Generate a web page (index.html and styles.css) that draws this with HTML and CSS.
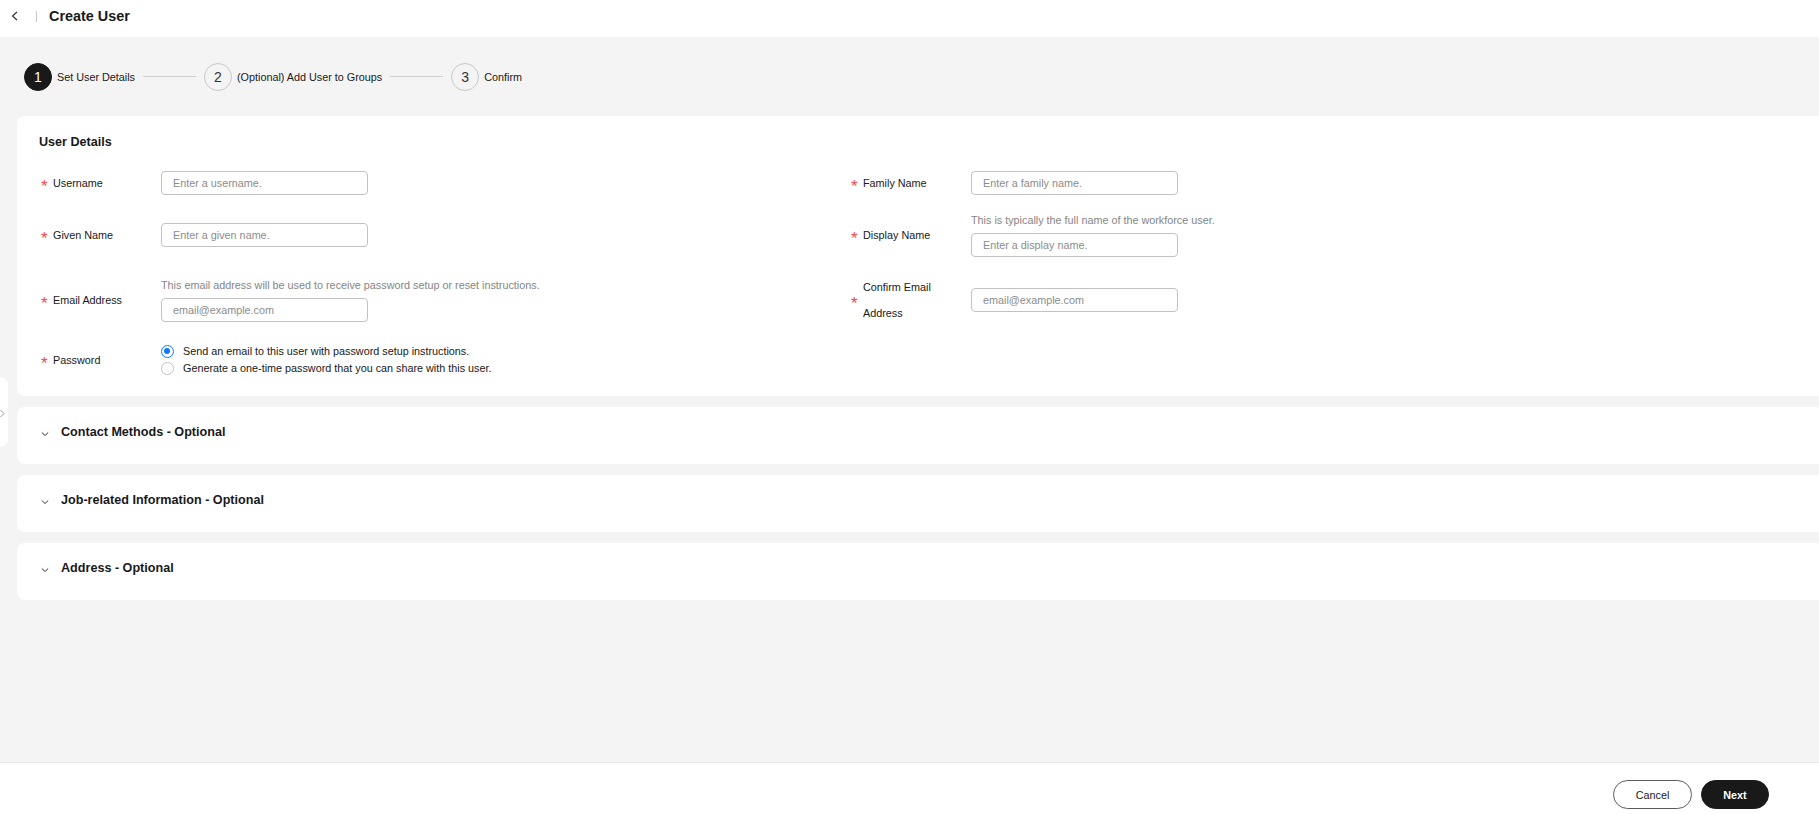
FILE: index.html
```html
<!DOCTYPE html>
<html lang="en">
<head>
  <meta charset="UTF-8" />
  <title>Create User</title>
  <link rel="stylesheet" href="styles.css">
</head>
<body>

<header class="topbar">
  <button class="back-btn" aria-label="Back">
    <svg width="10" height="14" viewBox="0 0 10 14"><path d="M7 3 L2.5 7 L7 11" fill="none" stroke="#333" stroke-width="1.2"/></svg>
  </button>
  <span class="topbar-divider"></span>
  <h1 class="page-title">Create User</h1>
</header>

<main class="content">
  <div class="side-toggle">
    <svg width="8" height="70" viewBox="0 0 8 70"><path d="M0.5 33 L4 36.5 L0.5 40" fill="none" stroke="#999" stroke-width="1"/></svg>
  </div>

  <!-- Wizard steps -->
  <ol class="steps">
    <li class="step active"><span class="step-num">1</span><span class="step-label">Set User Details</span></li>
    <li class="step-line"></li>
    <li class="step"><span class="step-num">2</span><span class="step-label">(Optional) Add User to Groups</span></li>
    <li class="step-line"></li>
    <li class="step"><span class="step-num">3</span><span class="step-label">Confirm</span></li>
  </ol>

  <!-- User details -->
  <section class="card details">
    <h2 class="card-title">User Details</h2>
    <div class="form-grid">
      <div class="field">
        <label class="field-label"><span class="req">*</span><span class="label-text">Username</span></label>
        <div class="field-control"><input class="text-input" type="text" placeholder="Enter a username."></div>
      </div>
      <div class="field">
        <label class="field-label"><span class="req">*</span><span class="label-text">Family Name</span></label>
        <div class="field-control"><input class="text-input" type="text" placeholder="Enter a family name."></div>
      </div>

      <div class="field">
        <label class="field-label"><span class="req">*</span><span class="label-text">Given Name</span></label>
        <div class="field-control"><input class="text-input" type="text" placeholder="Enter a given name."></div>
      </div>
      <div class="field">
        <label class="field-label"><span class="req">*</span><span class="label-text">Display Name</span></label>
        <div class="field-control">
          <p class="hint">This is typically the full name of the workforce user.</p>
          <input class="text-input" type="text" placeholder="Enter a display name.">
        </div>
      </div>

      <div class="field">
        <label class="field-label"><span class="req">*</span><span class="label-text">Email Address</span></label>
        <div class="field-control">
          <p class="hint">This email address will be used to receive password setup or reset instructions.</p>
          <input class="text-input" type="text" placeholder="email@example.com">
        </div>
      </div>
      <div class="field">
        <label class="field-label"><span class="req">*</span><span class="label-text">Confirm Email Address</span></label>
        <div class="field-control"><input class="text-input" type="text" placeholder="email@example.com"></div>
      </div>

      <div class="field">
        <label class="field-label"><span class="req">*</span><span class="label-text">Password</span></label>
        <div class="field-control radios">
          <label class="radio-option"><span class="radio checked"></span>Send an email to this user with password setup instructions.</label>
          <label class="radio-option"><span class="radio"></span>Generate a one-time password that you can share with this user.</label>
        </div>
      </div>
    </div>
  </section>

  <!-- Optional sections -->
  <section class="card collapse">
    <svg class="chevron" width="8" height="18" viewBox="0 0 8 18"><path d="M0.8 9.5 L4 12.5 L7.2 9.5" fill="none" stroke="#333" stroke-width="1"/></svg>
    <h3 class="collapse-title">Contact Methods - Optional</h3>
  </section>
  <section class="card collapse">
    <svg class="chevron" width="8" height="18" viewBox="0 0 8 18"><path d="M0.8 9.5 L4 12.5 L7.2 9.5" fill="none" stroke="#333" stroke-width="1"/></svg>
    <h3 class="collapse-title">Job-related Information - Optional</h3>
  </section>
  <section class="card collapse">
    <svg class="chevron" width="8" height="18" viewBox="0 0 8 18"><path d="M0.8 9.5 L4 12.5 L7.2 9.5" fill="none" stroke="#333" stroke-width="1"/></svg>
    <h3 class="collapse-title">Address - Optional</h3>
  </section>
</main>

<footer class="footer">
  <button class="btn">Cancel</button>
  <button class="btn btn-primary">Next</button>
</footer>

</body>
</html>
```

FILE: styles.css
```css
* {
  box-sizing: border-box;
}
html, body {
  height: 100%;
}
body {
  margin: 0;
  font-family: "Liberation Sans", Arial, sans-serif;
  font-size: 10.8px;
  color: #191919;
  background: #fff;
  display: flex;
  flex-direction: column;
  overflow: hidden;
}

/* top bar */
.topbar {
  height: 37px;
  flex-shrink: 0;
  display: flex;
  align-items: center;
  padding: 0 0 5px 10px;
  background: #fff;
}
.back-btn {
  border: none;
  background: none;
  padding: 0;
  width: 10px;
  height: 14px;
  cursor: pointer;
}
.back-btn svg {
  display: block;
}
.topbar-divider {
  width: 1px;
  height: 11px;
  background: #c7c7c7;
  margin: 0 12px 0 16px;
}
.page-title {
  margin: 0;
  font-size: 14.4px;
  font-weight: bold;
  line-height: 18px;
}

/* main area */
.content {
  flex: 1;
  position: relative;
  background: #f4f4f4;
  padding-left: 17px;
  overflow: hidden;
}
.side-toggle {
  position: absolute;
  left: 0;
  top: 340px;
  width: 8px;
  height: 70px;
  background: #fff;
  border-radius: 0 8px 8px 0;
}
.side-toggle svg {
  display: block;
}

/* steps */
.steps {
  list-style: none;
  margin: 0;
  padding: 0 0 0 7px;
  height: 79px;
  display: flex;
  align-items: center;
}
.step {
  display: flex;
  align-items: center;
}
.step-num {
  width: 28px;
  height: 28px;
  border-radius: 50%;
  border: 1px solid #c8c8c8;
  display: flex;
  align-items: center;
  justify-content: center;
  font-size: 14px;
  color: #333;
}
.step.active .step-num {
  background: #191919;
  border-color: #191919;
  color: #fff;
}
.step-label {
  margin-left: 5px;
  line-height: 14px;
}
.step-line {
  width: 53px;
  height: 1px;
  background: #d0d0d0;
  margin: 0 8px;
}

/* cards */
.card {
  background: #fff;
  border-radius: 8px 0 0 8px;
  margin-bottom: 11px;
}
.details {
  padding: 17px 22px 19px 22px;
}
.card-title {
  margin: 0 0 19px 0;
  font-size: 12.6px;
  line-height: 18px;
  font-weight: bold;
}
.form-grid {
  display: grid;
  grid-template-columns: 810px 810px;
  row-gap: 17px;
  align-items: center;
}
.field {
  display: flex;
  align-items: center;
}
.field-label {
  width: 122px;
  flex-shrink: 0;
  display: flex;
  align-items: center;
}
.req {
  width: 14px;
  padding-left: 2px;
  color: #f0494f;
  font-size: 17px;
  line-height: 14px;
  position: relative;
  top: 4px;
  flex-shrink: 0;
}
.label-text {
  max-width: 96px;
  line-height: 26px;
}
.hint {
  margin: 0 0 6px 0;
  line-height: 14px;
  color: #858585;
}
.text-input {
  display: block;
  width: 207px;
  height: 24px;
  padding: 0 11px;
  border: 1px solid #c2c2c2;
  border-radius: 4px;
  font-family: inherit;
  font-size: 10.8px;
  color: #191919;
  background: #fff;
  outline: none;
}
.text-input::placeholder {
  color: #8c8c8c;
}
.radios {
  display: flex;
  flex-direction: column;
}
.radio-option {
  display: flex;
  align-items: center;
  line-height: 17px;
}
.radio {
  width: 13px;
  height: 13px;
  border: 1px solid #c2c2c2;
  border-radius: 50%;
  margin-right: 9px;
  position: relative;
  flex-shrink: 0;
}
.radio.checked {
  border: 1.5px solid #1476ff;
}
.radio.checked::after {
  content: "";
  position: absolute;
  left: 2px;
  top: 2px;
  width: 6px;
  height: 6px;
  border-radius: 50%;
  background: #1476ff;
}

/* collapsed sections */
.collapse {
  height: 57px;
  display: flex;
  align-items: flex-start;
  padding: 16px 0 0 24px;
}
.chevron {
  display: block;
  margin-right: 12px;
}
.collapse-title {
  margin: 0;
  font-size: 12.6px;
  line-height: 18px;
  font-weight: bold;
}

/* footer */
.footer {
  height: 52px;
  flex-shrink: 0;
  display: flex;
  justify-content: flex-end;
  align-items: flex-start;
  gap: 9px;
  padding: 17px 50px 0 0;
  background: #fff;
  border-top: 1px solid #e6e6e6;
}
.btn {
  height: 29px;
  width: 79px;
  border: 1px solid #5c5c5c;
  border-radius: 15px;
  background: #fff;
  font-family: inherit;
  font-size: 10.8px;
  color: #191919;
  cursor: pointer;
}
.btn-primary {
  width: 68px;
  background: #191919;
  border-color: #191919;
  color: #fff;
  font-weight: bold;
}
```
